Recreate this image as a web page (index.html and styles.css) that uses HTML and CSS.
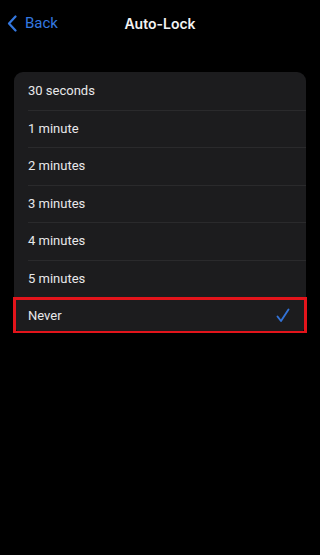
FILE: index.html
```html
<!DOCTYPE html>
<html lang="en">
<head>
  <meta charset="UTF-8">
  <meta name="viewport" content="width=device-width, initial-scale=1.0">
  <title>Auto-Lock</title>
  <link rel="stylesheet" href="styles.css">
</head>
<body>
  <header class="nav">
    <a class="back" href="#">
      <svg class="chevron" width="10" height="17" viewBox="0 0 10 17">
        <path d="M8.5 1.5 L2 8.5 L8.5 15.5" fill="none" stroke="#3478e0" stroke-width="2.2" stroke-linecap="round" stroke-linejoin="round"/>
      </svg>
      <span>Back</span>
    </a>
    <h1>Auto-Lock</h1>
  </header>

  <ul class="list">
    <li class="row">30 seconds</li>
    <li class="row">1 minute</li>
    <li class="row">2 minutes</li>
    <li class="row">3 minutes</li>
    <li class="row">4 minutes</li>
    <li class="row">5 minutes</li>
    <li class="row selected">
      Never
      <svg class="check" width="14" height="15" viewBox="0 0 14 15">
        <path d="M1.5 8.5 L5 13 L12.5 1.5" fill="none" stroke="#3272d6" stroke-width="1.9" stroke-linecap="round" stroke-linejoin="round"/>
      </svg>
    </li>
  </ul>
</body>
</html>
```

FILE: styles.css
```css
body {
  margin: 0;
  background: #000;
  color: #e8e8ea;
  font-family: Roboto, "Noto Sans", sans-serif;
}
.nav {
  position: relative;
  height: 46px;
  display: flex;
  align-items: center;
  justify-content: center;
}
.nav h1 {
  margin: 0;
  font-family: Inter, Roboto, sans-serif;
  font-size: 14px;
  font-weight: 600;
  color: #f2f2f2;
}
.back {
  position: absolute;
  left: 7px;
  top: 14px;
  display: flex;
  align-items: center;
  gap: 8px;
  color: #3478e0;
  text-decoration: none;
  font-size: 15px;
}
.list {
  list-style: none;
  margin: 26px 14px 0;
  padding: 0;
  background: #1c1c1e;
  border-radius: 9px;
}
.row {
  position: relative;
  height: 37.5px;
  display: flex;
  align-items: center;
  justify-content: space-between;
  padding: 0 14px;
  font-size: 13px;
}
.row + .row::before {
  content: "";
  position: absolute;
  top: 0;
  left: 14px;
  right: 0;
  height: 1px;
  background: #2a2a2c;
}
.selected {
  height: 35px;
  margin-top: 1px;
  outline: 3px solid #e3141b;
  outline-offset: -2px;
}
.selected::before {
  display: none;
}
.check {
  margin-right: 2px;
}
```
